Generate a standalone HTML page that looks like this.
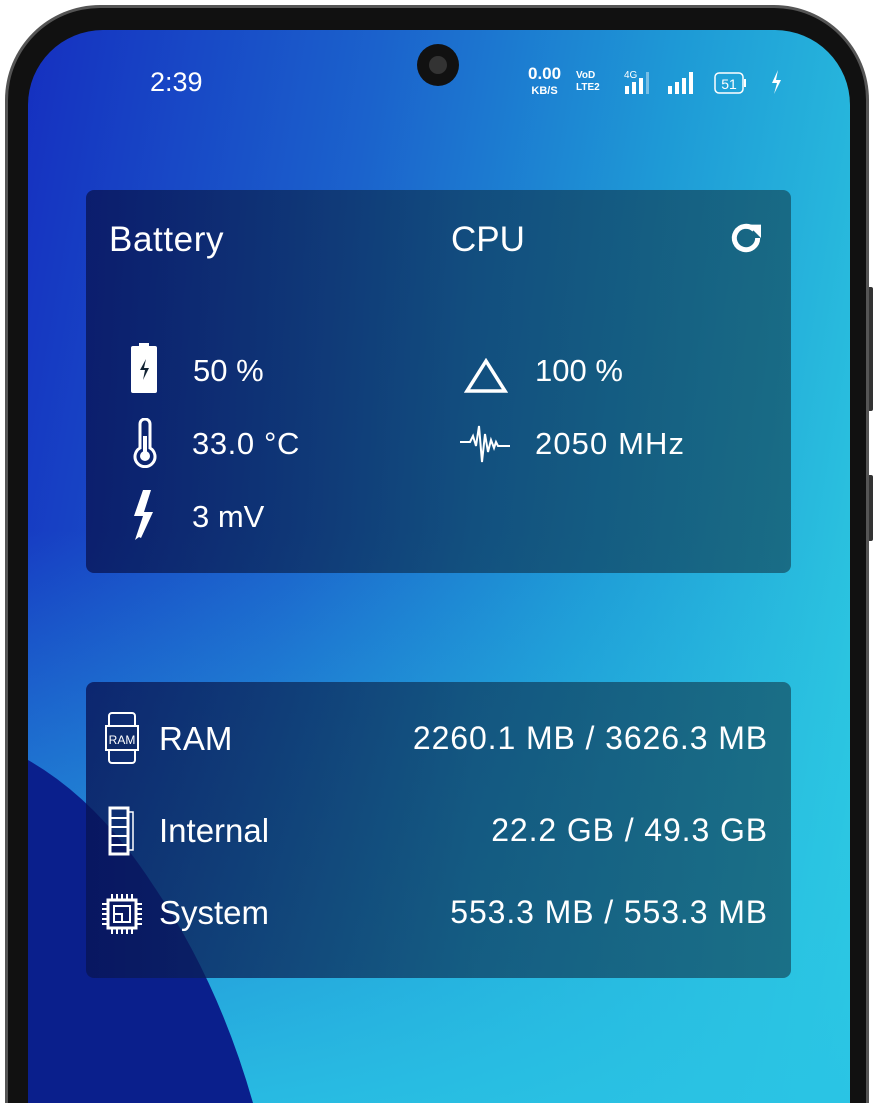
<!DOCTYPE html>
<html style="width:880px;height:1103px;overflow:hidden"><head><meta charset="utf-8"><style>
*{margin:0;padding:0;box-sizing:border-box}
body{width:880px;height:1103px;background:#fff;position:relative;overflow:hidden;font-family:"Liberation Sans","DejaVu Sans",sans-serif;color:#fff}
.frame{position:absolute;left:5px;top:5px;width:864px;height:1098px;border-radius:95px 95px 0 0;background:#111;border:3px solid #555;border-bottom:0}
.btn{position:absolute;left:866px;width:7px;background:#333;border-radius:2px}
.screen{position:absolute;left:28px;top:30px;width:822px;height:1073px;border-radius:75px 75px 0 0;overflow:hidden;background:linear-gradient(100deg,#1530c0 0%,#1b62cc 35%,#1e9ad6 65%,#2fd0e2 100%)}
.screen:after{content:"";position:absolute;left:0;top:500px;width:822px;height:573px;background:linear-gradient(180deg,rgba(40,200,230,0) 0%,rgba(42,195,228,.9) 100%)}
.card{position:absolute;left:58px;width:705px;border-radius:8px;background:linear-gradient(90deg,rgba(8,20,85,.78),rgba(14,60,95,.72) 55%,rgba(20,80,100,.72));z-index:3}
.t{position:absolute;white-space:nowrap}
.v{letter-spacing:1px}
</style></head><body>
<div class="btn" style="top:287px;height:124px"></div>
<div class="btn" style="top:475px;height:66px"></div>
<div class="frame"></div>
<div class="screen">
<svg style="position:absolute;left:0;top:0;z-index:1" width="822" height="1073"><path d="M0 730 Q70 770 125 855 Q190 950 225 1073 L0 1073Z" fill="#0a1f8c"/></svg>
<div class="card" style="top:160px;height:383px">
 <div class="t" style="left:23px;top:30px;font-size:35px;letter-spacing:0.6px">Battery</div>
 <div class="t" style="left:365px;top:30px;font-size:35px">CPU</div>
 <svg class="t" style="left:640px;top:28px" width="40" height="40" viewBox="0 0 24 24"><path d="M19 12a7 7 0 1 1-2.1-5" fill="none" stroke="#fff" stroke-width="3"/><path d="M13 4h8v8z" fill="#fff"/></svg>
 <svg class="t" style="left:45px;top:153px" width="26" height="50" viewBox="0 0 26 50"><rect x="8" y="0" width="10" height="4" fill="#fff"/><rect x="0" y="3" width="26" height="47" rx="2" fill="#fff"/><path d="M15 16l-6 11h5l-2 10 6-12h-5z" fill="#123"/></svg>
 <div class="t" style="left:107px;top:163px;font-size:31px">50 %</div>
 <svg class="t" style="left:45px;top:228px" width="28" height="50" viewBox="0 0 28 50"><path d="M9 30V6a5 5 0 0 1 10 0v24a10 10 0 1 1-10 0z" fill="none" stroke="#fff" stroke-width="3"/><circle cx="14" cy="38" r="5" fill="#fff"/><rect x="12" y="18" width="4" height="18" fill="#fff"/></svg>
 <div class="t" style="left:106px;top:236px;font-size:31px;letter-spacing:0.6px">33.0 °C</div>
 <svg class="t" style="left:45px;top:300px" width="26" height="50" viewBox="0 0 26 50"><path d="M12 0L3 26h9L4 50l4-3 2 1L22 22h-9L20 0z" fill="#fff"/></svg>
 <div class="t" style="left:106px;top:309px;font-size:31px">3 mV</div>
 <svg class="t" style="left:378px;top:168px" width="44" height="36" viewBox="0 0 44 36"><path d="M22 3L3 33h38z" fill="none" stroke="#fff" stroke-width="3.5"/></svg>
 <div class="t" style="left:449px;top:163px;font-size:31px">100 %</div>
 <svg class="t" style="left:372px;top:230px" width="52" height="44" viewBox="0 0 52 44"><path d="M2 22h10l3-6 3 10 3-20 3 36 3-28 3 18 3-12 3 8 2-6 2 4h12" fill="none" stroke="#fff" stroke-width="2"/></svg>
 <div class="t" style="left:449px;top:236px;font-size:31px;letter-spacing:1.1px">2050 MHz</div>
</div>
<div class="card" style="top:652px;height:296px">
 <svg class="t" style="left:16px;top:30px" width="40" height="52" viewBox="0 0 40 52"><rect x="7" y="1" width="26" height="50" rx="3" fill="none" stroke="#fff" stroke-width="2"/><rect x="4" y="14" width="32" height="24" fill="#0e2a68" stroke="#fff" stroke-width="2"/><text x="20" y="32" font-size="12" text-anchor="middle" fill="#fff" font-family="Liberation Sans">RAM</text></svg>
 <div class="t" style="left:73px;top:38px;font-size:33px">RAM</div>
 <div class="t" style="right:23px;top:38px;font-size:32px;letter-spacing:0.9px">2260.1 MB / 3626.3 MB</div>
 <svg class="t" style="left:22px;top:124px" width="28" height="50" viewBox="0 0 28 50"><rect x="2" y="2" width="18" height="46" fill="none" stroke="#fff" stroke-width="3"/><path d="M2 12h18M2 21h18M2 30h18M2 39h18" stroke="#fff" stroke-width="2"/><path d="M21 6h4v38h-4" fill="none" stroke="#fff" stroke-width="1.5"/></svg>
 <div class="t" style="left:73px;top:130px;font-size:33px">Internal</div>
 <div class="t" style="right:23px;top:130px;font-size:32px;letter-spacing:0.9px">22.2 GB / 49.3 GB</div>
 <svg class="t" style="left:14px;top:210px" width="44" height="44" viewBox="0 0 44 44"><rect x="8" y="8" width="28" height="28" fill="none" stroke="#fff" stroke-width="3"/><rect x="14" y="14" width="16" height="16" fill="none" stroke="#fff" stroke-width="2"/><path d="M14 22h8v8" fill="none" stroke="#fff" stroke-width="2"/><path d="M12 2v6M17 2v6M22 2v6M27 2v6M32 2v6M12 36v6M17 36v6M22 36v6M27 36v6M32 36v6M2 12h6M2 17h6M2 22h6M2 27h6M2 32h6M36 12h6M36 17h6M36 22h6M36 27h6M36 32h6" stroke="#fff" stroke-width="2"/></svg>
 <div class="t" style="left:73px;top:212px;font-size:33px">System</div>
 <div class="t" style="right:23px;top:212px;font-size:32px;letter-spacing:0.9px">553.3 MB / 553.3 MB</div>
</div>
<div class="t" style="left:122px;top:37px;font-size:27px;z-index:4">2:39</div>
<div class="t" style="left:389px;top:14px;width:42px;height:42px;border-radius:50%;background:#111;z-index:4"><div style="margin:12px;width:18px;height:18px;border-radius:50%;background:#333"></div></div>
<div class="t" style="left:500px;top:36px;font-size:17px;font-weight:bold;z-index:4;line-height:15px;text-align:center">0.00<br><span style="font-size:11px">KB/S</span></div>
<div class="t" style="left:548px;top:40px;font-size:10px;font-weight:bold;z-index:4;line-height:12px">VoD<br>LTE2</div>
<svg class="t" style="left:596px;top:38px;z-index:4" width="160" height="28"><text x="0" y="10" font-size="10" fill="#fff" font-family="Liberation Sans">4G</text><rect x="1" y="18" width="4" height="8" fill="#fff"/><rect x="8" y="14" width="4" height="12" fill="#fff"/><rect x="15" y="10" width="4" height="16" fill="#fff"/><rect x="22" y="4" width="3" height="22" fill="#fff" opacity=".4"/><rect x="44" y="18" width="4" height="8" fill="#fff"/><rect x="51" y="14" width="4" height="12" fill="#fff"/><rect x="58" y="10" width="4" height="16" fill="#fff"/><rect x="65" y="4" width="4" height="22" fill="#fff"/><rect x="91" y="5" width="28" height="20" rx="4" fill="none" stroke="#fff" stroke-width="1.5"/><rect x="120" y="11" width="2" height="8" fill="#fff"/><text x="105" y="21" font-size="14" fill="#fff" text-anchor="middle" font-family="Liberation Sans">51</text><path d="M154 2l-6 13h5l-3 11 7-14h-5z" fill="#fff"/></svg>
</div>
</body></html>
